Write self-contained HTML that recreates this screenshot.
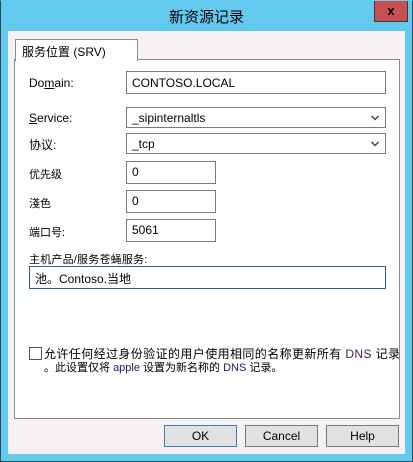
<!DOCTYPE html>
<html><head><meta charset="utf-8"><style>
*{margin:0;padding:0;box-sizing:border-box}
body{width:413px;height:462px;overflow:hidden;background:#63c9ef;font-family:"Liberation Sans","Noto Sans CJK SC",sans-serif;font-size:12px;color:#000;position:relative}
.frame{position:absolute;left:0;top:0;width:413px;height:462px;border:1px solid #2e4a5a;border-top-color:#63c9ef}
.title{position:absolute;left:0;width:413px;top:6px;text-align:center;font-size:15px;color:#000}
.close{position:absolute;left:374px;top:1px;width:34px;height:21px;background:#c75050;border:1px solid #3a3a3a;border-top:none;text-align:center;font-weight:bold;font-size:13px;line-height:20px}
.client{position:absolute;left:8px;top:31px;width:397px;height:423px;background:#f5f1f5}
.panel{position:absolute;left:14px;top:59px;width:386px;height:360px;background:#fff;border:1px solid #8a8a8a}
.tab{position:absolute;left:15px;top:39px;width:123px;height:22px;background:#fff;border:1px solid #8a8a8a;border-bottom:none;padding:3px 0 0 6px;font-size:12px}
.lbl{position:absolute;left:29px;font-size:12px}
.in{position:absolute;background:#fff;border:1px solid #7a7a7a;padding:4px 0 0 5px;font-size:12px}
.arrow{position:absolute;right:6px;top:7px}
.btn{position:absolute;top:425px;width:73px;height:22px;background:#e1e1e1;border:1px solid #7a7a7a;text-align:center;line-height:20px;font-size:12px}
</style></head><body>
<div class="frame"></div>
<div class="title">新资源记录</div>
<div class="close">x</div>
<div class="client"></div>
<div class="panel"></div>
<div class="tab">服务位置 (SRV)</div>
<div class="lbl" style="top:76px">Do<u>m</u>ain:</div>
<div class="in" style="left:126px;top:71px;width:260px;height:23px">CONTOSO.LOCAL</div>
<div class="lbl" style="top:111px"><u>S</u>ervice:</div>
<div class="in" style="left:126px;top:107px;width:260px;height:21px;padding-top:3px">_sipinternaltls<svg class="arrow" width="8" height="6" viewBox="0 0 8 6"><path d="M0.5 1 L4 4.5 L7.5 1" stroke="#444" stroke-width="1.5" fill="none"/></svg></div>
<div class="lbl" style="top:136px">协议:</div>
<div class="in" style="left:126px;top:133px;width:260px;height:21px;padding-top:3px">_tcp<svg class="arrow" width="8" height="6" viewBox="0 0 8 6"><path d="M0.5 1 L4 4.5 L7.5 1" stroke="#444" stroke-width="1.5" fill="none"/></svg></div>
<div class="lbl" style="top:166px;font-size:11px">优先级</div>
<div class="in" style="left:126px;top:161px;width:90px;height:23px;padding-top:3px">0</div>
<div class="lbl" style="top:195px;font-size:11px">淺色</div>
<div class="in" style="left:126px;top:190px;width:90px;height:23px;padding-top:3px">0</div>
<div class="lbl" style="top:224px;font-size:11px">端口号:</div>
<div class="in" style="left:126px;top:219px;width:90px;height:23px;padding-top:3px">5061</div>
<div class="lbl" style="top:251px;font-size:11px;letter-spacing:0.2px">主机产品/服务苍蝇服务:</div>
<div class="in" style="left:29px;top:266px;width:357px;height:23px;border-color:#2b5c8a;padding-top:3px">池。Contoso.当地</div>
<div style="position:absolute;left:29px;top:347px;width:13px;height:13px;border:1px solid #555;background:#fff"></div>
<div style="position:absolute;left:44px;top:345px;font-size:12px;white-space:nowrap;letter-spacing:0.4px">允许任何经过身份验证的用户使用相同的名称更新所有 <span style="color:#402060">DNS</span> 记录</div>
<div style="position:absolute;left:44px;top:359px;font-size:11px;white-space:nowrap">。此设置仅将 <span style="color:#202060">apple</span> 设置为新名称的 <span style="color:#202060">DNS</span> 记录。</div>
<div class="btn" style="left:164px;border-color:#3c7fb1">OK</div>
<div class="btn" style="left:245px">Cancel</div>
<div class="btn" style="left:326px">Help</div>
</body></html>
